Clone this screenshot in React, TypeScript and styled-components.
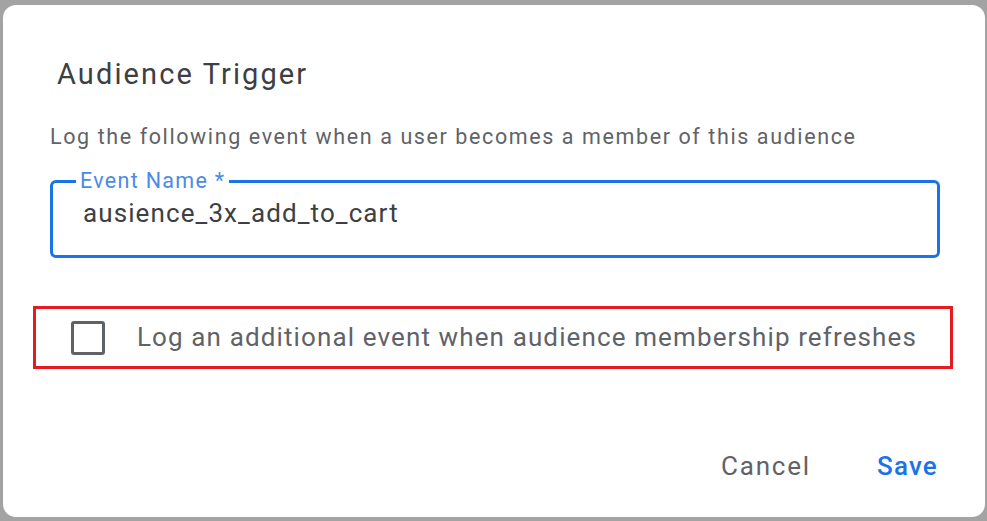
import React from "react";
import styled, { createGlobalStyle } from "styled-components";

const Global = createGlobalStyle`
  html, body { margin: 0; padding: 0; background: #a3a3a3; }
  body { font-family: Roboto, "Liberation Sans", Arial, sans-serif; }
  * { box-sizing: border-box; }
`;

const Backdrop = styled.div`
  width: 987px;
  height: 521px;
  padding: 5px 2px 4px 3px;
  background: #a3a3a3;
`;

const Dialog = styled.div`
  width: 100%;
  height: 100%;
  background: #ffffff;
  border-radius: 13px;
  display: flex;
  flex-direction: column;
  padding: 52px 47px 0 47px;
`;

const Title = styled.h2`
  margin: 0 0 0 7px;
  font-size: 29px;
  letter-spacing: 2.1px;
  font-weight: 400;
  color: #3c4043;
  line-height: 34px;
`;

const Description = styled.p`
  margin: 32px 0 0 0;
  font-size: 21.5px;
  letter-spacing: 1.6px;
  color: #5f6368;
  line-height: 28px;
`;

const Field = styled.fieldset`
  margin: 20px 0 0 0;
  width: 890px;
  height: 87px;
  border: 3px solid #1a73e8;
  border-radius: 6px;
  padding: 0 30px;
`;

const Legend = styled.legend`
  padding: 0 4px;
  margin-left: -7px;
  font-size: 21.5px;
  letter-spacing: 1.3px;
  color: #4a8be6;
  line-height: 20px;
`;

const Value = styled.div`
  font-size: 26px;
  letter-spacing: 1.1px;
  color: #3c4043;
  line-height: 30px;
  margin-top: 7px;
`;

const Highlight = styled.div`
  margin: 48px 0 0 -17px;
  width: 920px;
  height: 63px;
  border: 3px solid #e41b23;
  display: flex;
  align-items: center;
  padding-left: 35px;
  gap: 32px;
`;

const Box = styled.span`
  width: 34px;
  height: 34px;
  border: 3px solid #5f6368;
  border-radius: 3px;
  flex: none;
`;

const CheckLabel = styled.span`
  font-size: 26px;
  letter-spacing: 1.12px;
  color: #5f6368;
  line-height: 30px;
  margin-top: -2px;
  white-space: nowrap;
`;

const Actions = styled.div`
  margin-top: auto;
  display: flex;
  justify-content: flex-end;
  gap: 66px;
  padding: 0 0 36px 0;
`;

const Button = styled.button<{ $primary?: boolean }>`
  border: none;
  background: none;
  padding: 0;
  font-family: inherit;
  font-size: 26px;
  letter-spacing: ${(p) => (p.$primary ? "1.2px" : "1.8px")};
  line-height: 30px;
  font-weight: ${(p) => (p.$primary ? 500 : 400)};
  color: ${(p) => (p.$primary ? "#1a73e8" : "#5f6368")};
`;

export default function App() {
  return (
    <>
      <Global />
      <Backdrop>
        <Dialog>
          <Title>Audience Trigger</Title>
          <Description>
            Log the following event when a user becomes a member of this audience
          </Description>
          <Field>
            <Legend>Event Name *</Legend>
            <Value>ausience_3x_add_to_cart</Value>
          </Field>
          <Highlight>
            <Box />
            <CheckLabel>Log an additional event when audience membership refreshes</CheckLabel>
          </Highlight>
          <Actions>
            <Button>Cancel</Button>
            <Button $primary>Save</Button>
          </Actions>
        </Dialog>
      </Backdrop>
    </>
  );
}
